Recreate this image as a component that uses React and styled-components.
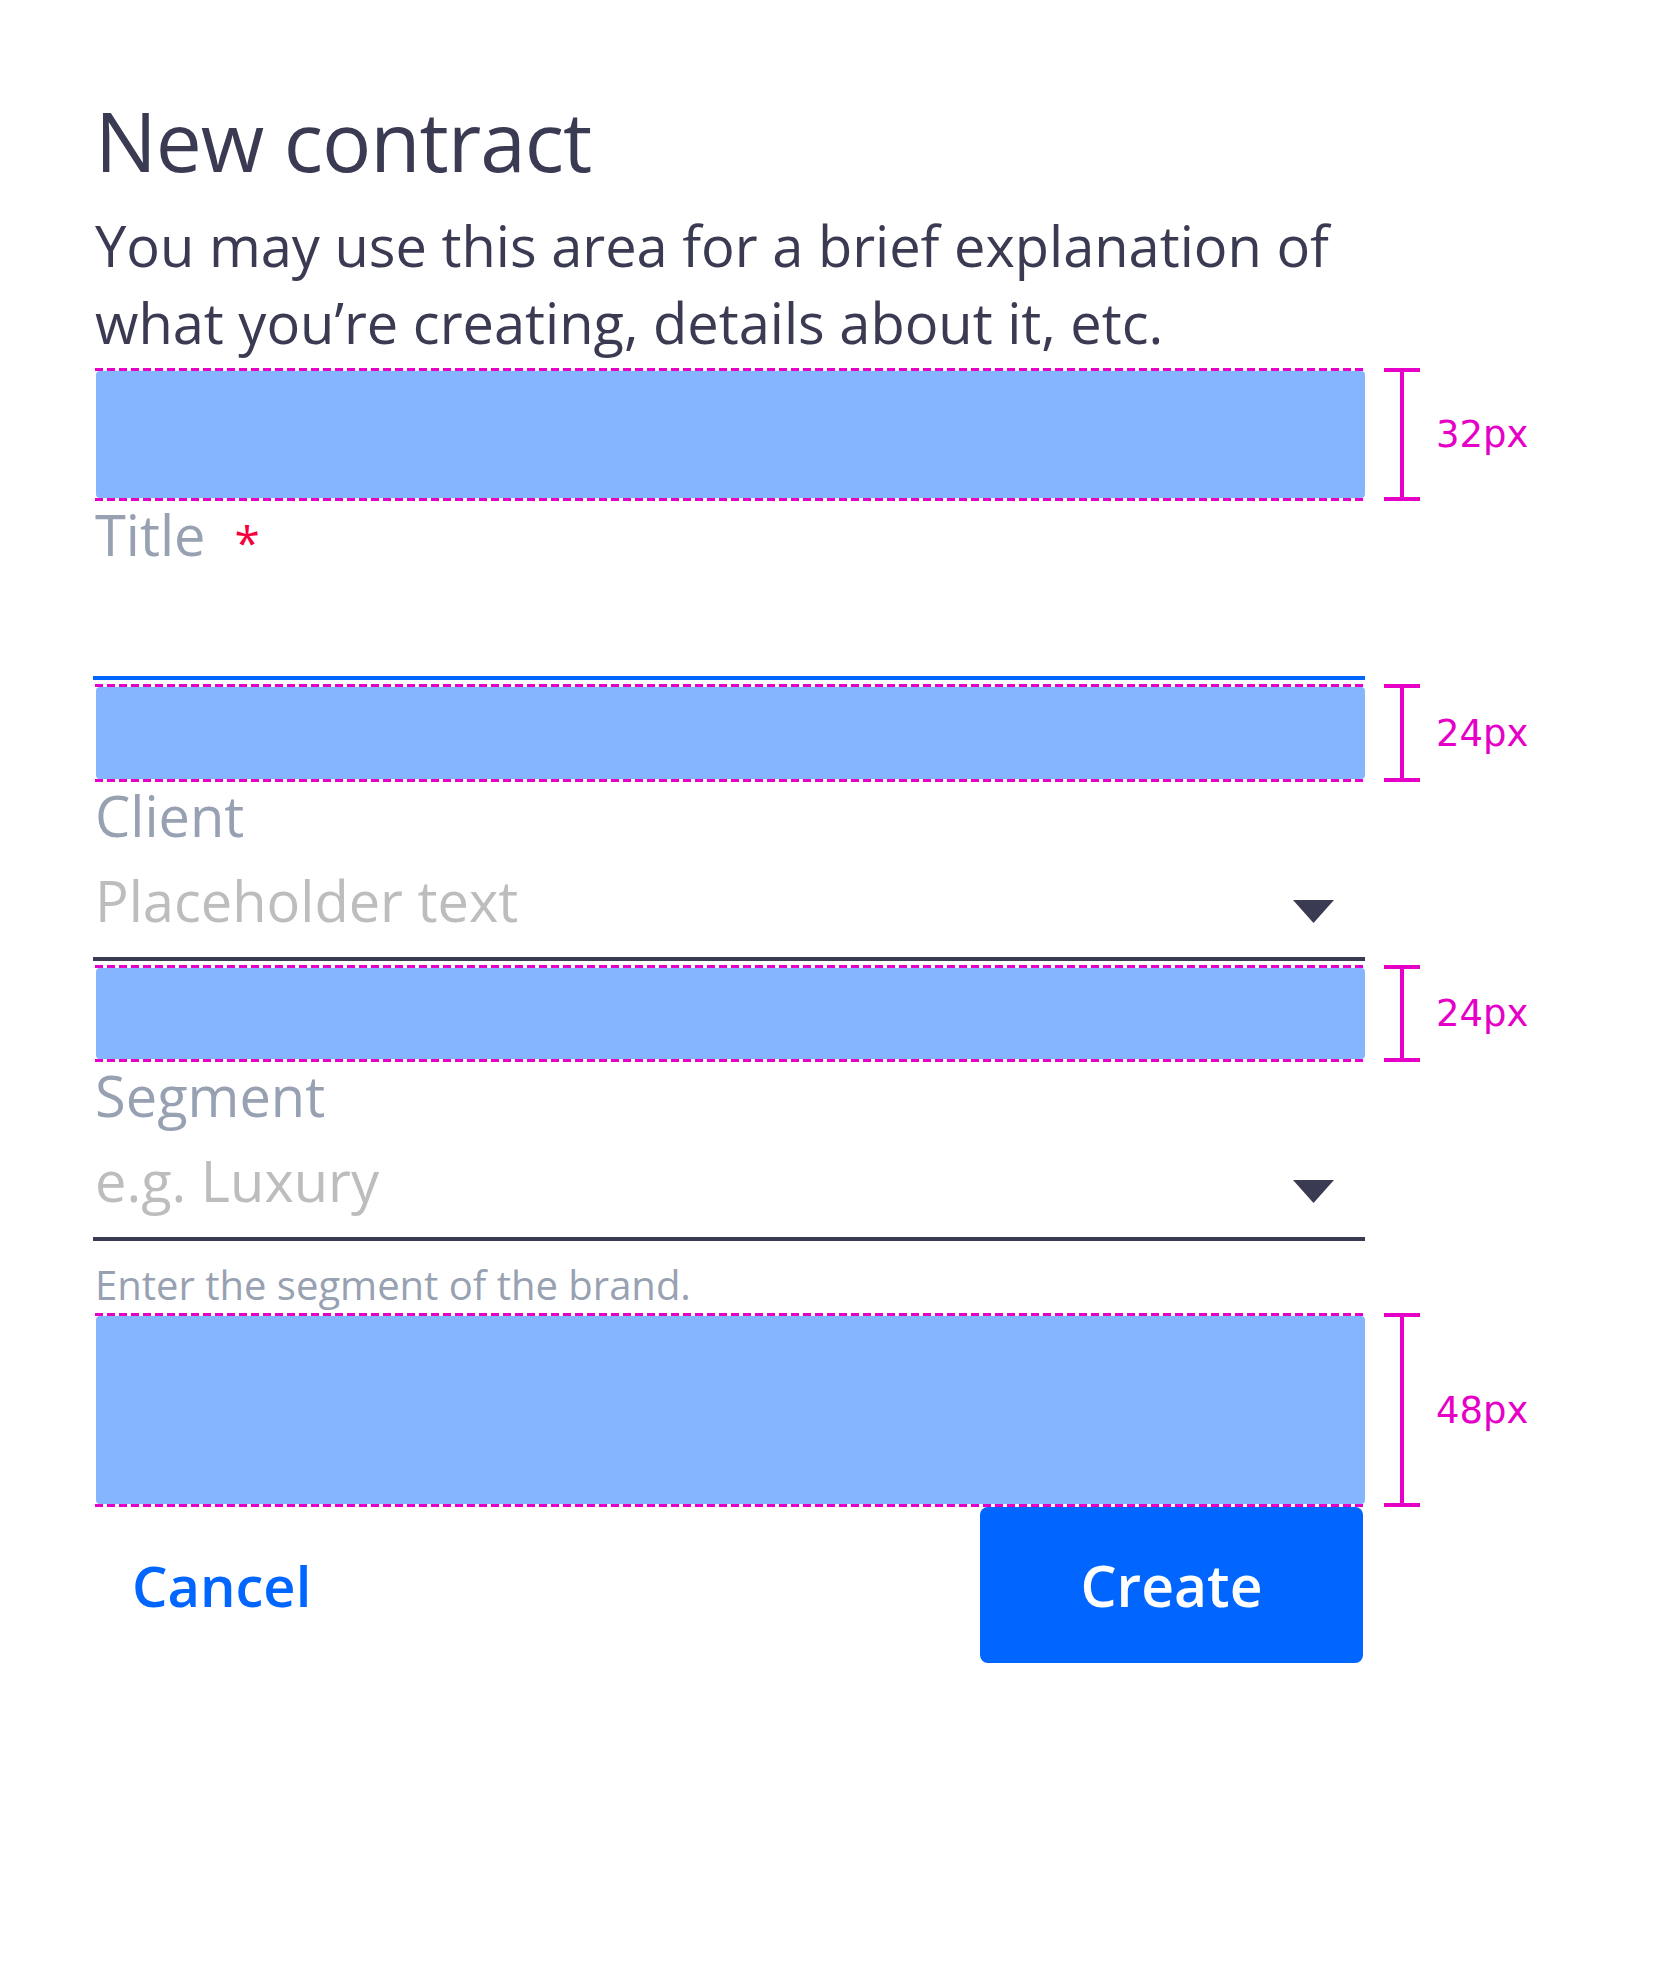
import React from "react";
import styled, { createGlobalStyle } from "styled-components";

const INK = "#3b3a53";
const MUTED = "#97a1b2";
const PLACEHOLDER = "#bdbdbd";
const PRIMARY = "#0066ff";
const MAGENTA = "#e600c7";
const FILL = "#86b5ff";
const DANGER = "#f5003d";

const GlobalStyle = createGlobalStyle`
  html, body {
    margin: 0;
    padding: 0;
    background: #ffffff;
  }
  body {
    font-family: "Open Sans", "Noto Sans", sans-serif;
    color: ${INK};
  }
  * { box-sizing: border-box; }
`;

const Page = styled.main`
  min-height: 1984px;
  padding: 90px 0 0 95px;
`;

const Dialog = styled.section`
  display: flex;
  flex-direction: column;
  width: 1270px;
`;

const Heading = styled.h1`
  margin: 0;
  font-size: 82px;
  line-height: 100px;
  letter-spacing: -1px;
  font-weight: 400;
  color: ${INK};
`;

const Description = styled.p`
  margin: 17px 0 0;
  font-size: 56px;
  line-height: 77px;
  font-weight: 400;
  color: ${INK};
`;

const SpacerRow = styled.div`
  display: flex;
  align-items: stretch;
  width: max-content;
  margin-top: ${(p) => p.$gap}px;
`;

const Spacer = styled.div`
  position: relative;
  width: 1271px;
  height: ${(p) => p.$h}px;
  padding: 3px 1px;
  &::before,
  &::after {
    content: "";
    position: absolute;
    left: 0;
    right: 0;
    height: 3px;
    background: repeating-linear-gradient(
      90deg,
      ${MAGENTA} 0 8px,
      transparent 8px 12px
    );
  }
  &::before { top: 0; }
  &::after { bottom: 0; }
`;

const SpacerFill = styled.div`
  height: 100%;
  background: ${FILL};
  border-radius: 4px;
`;

const Annotation = styled.div`
  display: flex;
  align-items: center;
  gap: 16px;
  margin-left: 18px;
`;

const Bracket = styled.div`
  width: 36px;
  align-self: stretch;
  border-top: 4px solid ${MAGENTA};
  border-bottom: 4px solid ${MAGENTA};
  background: linear-gradient(${MAGENTA}, ${MAGENTA}) center / 4px 100% no-repeat;
`;

const Measure = styled.span`
  font-family: "DejaVu Sans", sans-serif;
  font-size: 37px;
  line-height: 1;
  color: ${MAGENTA};
`;

const Field = styled.div`
  display: flex;
  flex-direction: column;
`;

const Label = styled.label`
  display: block;
  margin-top: 1px;
  font-size: 56px;
  line-height: 64px;
  color: ${MUTED};
`;

const Required = styled.span`
  color: ${DANGER};
  font-size: 46px;
  line-height: 1;
  margin-left: 29px;
  vertical-align: -4px;
`;

const Control = styled.div`
  display: flex;
  align-items: flex-start;
  justify-content: space-between;
  height: 114px;
  margin-left: -2px;
  padding: 21px 31px 0 2px;
  border-bottom: 4px solid ${(p) => (p.$focused ? PRIMARY : INK)};
`;

const Placeholder = styled.span`
  font-size: 56px;
  line-height: 64px;
  color: ${PLACEHOLDER};
`;

const Caret = styled.svg`
  flex: none;
  margin-top: 32px;
`;

const Helper = styled.p`
  margin: 16px 0 0;
  font-size: 40px;
  line-height: 56px;
  color: ${MUTED};
`;

const Actions = styled.div`
  display: flex;
  justify-content: space-between;
  align-items: stretch;
  height: 156px;
  padding-right: 2px;
`;

const TextButton = styled.button`
  border: 0;
  background: none;
  padding: 0 37px;
  font-family: "Open Sans", "Noto Sans", sans-serif;
  font-size: 56px;
  font-weight: 600;
  color: ${PRIMARY};
  cursor: pointer;
`;

const PrimaryButton = styled.button`
  width: 383px;
  border: 0;
  border-radius: 8px;
  background: ${PRIMARY};
  font-family: "Open Sans", "Noto Sans", sans-serif;
  font-size: 57px;
  font-weight: 600;
  color: #ffffff;
  cursor: pointer;
`;

function SpaceMark({ h, gap, label }) {
  return (
    <SpacerRow $gap={gap}>
      <Spacer $h={h}>
        <SpacerFill />
      </Spacer>
      <Annotation>
        <Bracket />
        <Measure>{label}</Measure>
      </Annotation>
    </SpacerRow>
  );
}

function DownCaret() {
  return (
    <Caret width="41" height="23" viewBox="0 0 41 23" aria-hidden="true">
      <polygon points="0,0 41,0 20.5,23" fill={INK} />
    </Caret>
  );
}

export default function App() {
  return (
    <>
      <GlobalStyle />
      <Page>
        <Dialog>
          <Heading>New contract</Heading>
          <Description>
            You may use this area for a brief explanation of what you’re
            creating, details about it, etc.
          </Description>

          <SpaceMark h={133} gap={7} label="32px" />

          <Field>
            <Label>
              Title<Required>*</Required>
            </Label>
            <Control $focused />
          </Field>

          <SpaceMark h={98} gap={4} label="24px" />

          <Field>
            <Label>Client</Label>
            <Control>
              <Placeholder>Placeholder text</Placeholder>
              <DownCaret />
            </Control>
          </Field>

          <SpaceMark h={97} gap={4} label="24px" />

          <Field>
            <Label>Segment</Label>
            <Control>
              <Placeholder>e.g. Luxury</Placeholder>
              <DownCaret />
            </Control>
          </Field>

          <Helper>Enter the segment of the brand.</Helper>

          <SpaceMark h={194} gap={0} label="48px" />

          <Actions>
            <TextButton type="button">Cancel</TextButton>
            <PrimaryButton type="button">Create</PrimaryButton>
          </Actions>
        </Dialog>
      </Page>
    </>
  );
}
